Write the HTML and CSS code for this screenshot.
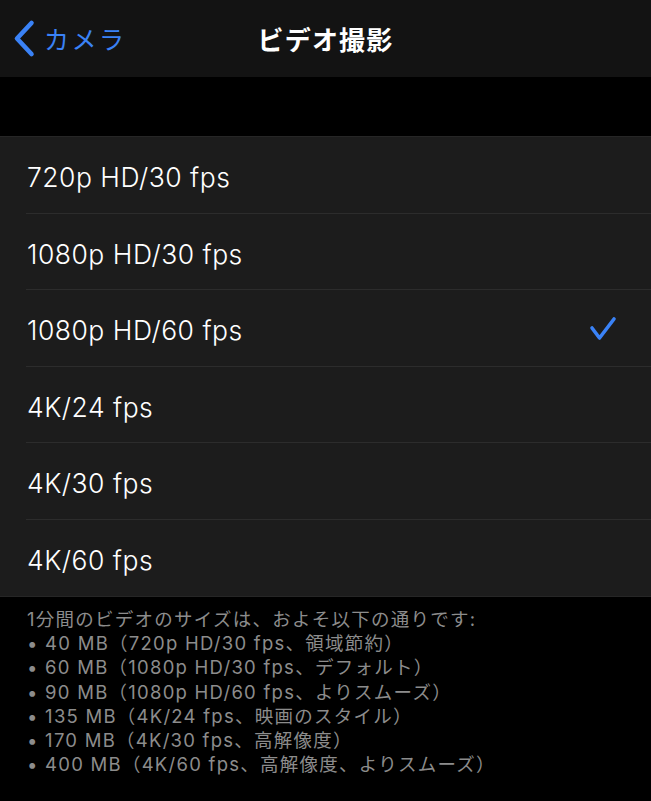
FILE: index.html
```html
<!DOCTYPE html>
<html lang="ja">
<head>
<meta charset="utf-8">
<link rel="stylesheet" href="styles.css">
</head>
<body>
<header class="nav">
  <a class="back">
    <svg class="chev" width="26" height="40" viewBox="0 0 26 40"><path d="M19.5 4 L5 19.5 L19.5 35" fill="none" stroke="#3a82f6" stroke-width="4.6" stroke-linecap="round" stroke-linejoin="round"/></svg>
    <span class="back-label">カメラ</span>
  </a>
  <h1 class="title">ビデオ撮影</h1>
</header>
<div class="spacer"></div>
<ul class="list">
  <li class="row"><span class="label">720p HD/30 fps</span></li>
  <li class="row"><span class="label">1080p HD/30 fps</span></li>
  <li class="row"><span class="label">1080p HD/60 fps</span>
    <svg class="check" width="30" height="28" viewBox="0 0 30 28"><path d="M3 13 L10.5 23 L25 4" fill="none" stroke="#3a82f6" stroke-width="3.6" stroke-linecap="round" stroke-linejoin="round"/></svg>
  </li>
  <li class="row"><span class="label">4K/24 fps</span></li>
  <li class="row"><span class="label">4K/30 fps</span></li>
  <li class="row"><span class="label">4K/60 fps</span></li>
</ul>
<div class="footer">
  <p>1分間のビデオのサイズは、およそ以下の通りです:</p>
  <p>• 40 MB（720p HD/30 fps、領域節約）</p>
  <p>• 60 MB（1080p HD/30 fps、デフォルト）</p>
  <p>• 90 MB（1080p HD/60 fps、よりスムーズ）</p>
  <p>• 135 MB（4K/24 fps、映画のスタイル）</p>
  <p>• 170 MB（4K/30 fps、高解像度）</p>
  <p>• 400 MB（4K/60 fps、高解像度、よりスムーズ）</p>
</div>
</body>
</html>
```
FILE: styles.css
```css
* { box-sizing: border-box; }
html, body { margin: 0; padding: 0; }
body {
  width: 651px;
  height: 801px;
  background: #000;
  font-family: Inter, "Noto Sans CJK JP", sans-serif;
  overflow: hidden;
}
.nav {
  position: relative;
  height: 77px;
  background: #131313;
  display: flex;
  align-items: center;
  justify-content: center;
}
.back {
  position: absolute;
  left: 12px;
  top: 0;
  height: 77px;
  display: flex;
  align-items: center;
  gap: 6px;
  color: #3a82f6;
}
.chev { display: block; margin-top: 1px; }
.back-label {
  font-family: "Noto Sans CJK JP", sans-serif;
  font-size: 25px;
  letter-spacing: 2.5px;
  line-height: 1;
}
.title {
  margin: 0;
  color: #fff;
  font-family: "Noto Sans CJK JP", sans-serif;
  font-size: 26px;
  font-weight: 700;
  letter-spacing: 1.2px;
  line-height: 1;
}
.spacer {
  height: 60px;
  background: #000;
  border-bottom: 1px solid #262626;
}
.list {
  list-style: none;
  margin: 0;
  padding: 0 0 0 26px;
  background: #1c1c1c;
}
.row {
  height: 76.5px;
  display: flex;
  align-items: center;
  justify-content: space-between;
  padding-right: 32px;
  border-bottom: 1px solid #2c2c2c;
}
.row:last-child { border-bottom: none; }
.label {
  color: #fff;
  font-size: 26.5px;
  font-weight: 300;
  letter-spacing: 0.5px;
  padding: 5px 0 0 1px;
}
.check { display: block; margin-top: 2px; }
.footer {
  border-top: 1px solid #262626;
  padding: 10px 0 0 27px;
  color: #8c8c8c;
  font-family: Inter, "Noto Sans CJK JP", sans-serif;
  font-size: 18.5px;
  letter-spacing: 1.25px;
}
.footer p {
  margin: 0;
  line-height: 24.2px;
}
```
